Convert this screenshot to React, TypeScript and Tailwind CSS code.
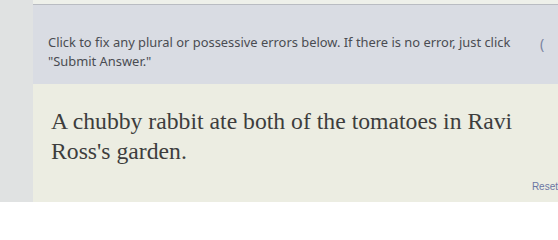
export default function App() {
  return (
    <div className="flex h-[202px] w-[558px] overflow-hidden bg-[#dfe1e1]">
      {/* left margin of the page */}
      <div className="w-[33px] shrink-0 bg-[#e0e2e2]" />

      <div className="flex min-w-0 flex-1 flex-col">
        {/* top edge */}
        <div className="h-[5px] shrink-0 border-b border-[#b9bcc2] bg-[#eef0ea]" />

        {/* instructions */}
        <div className="flex h-[79px] shrink-0 items-start bg-[#d9dce3] pl-[15px] pr-[10px] pt-[28px]">
          <p className="w-[478px] shrink-0 font-['Noto_Sans',sans-serif] text-[12.9px] leading-[19px] text-[#4a4c52]">
            Click to fix any plural or possessive errors below. If there is no error, just click
            <br />
            "Submit Answer."
          </p>
          <span className="ml-[14px] mt-[1px] font-['Noto_Sans',sans-serif] text-[14px] leading-[19px] text-[#7a83a0]">
            (
          </span>
        </div>

        {/* question */}
        <div className="relative flex-1 bg-[#ecede2] pl-[18px] pt-[22px]">
          <p className="w-[480px] font-['Liberation_Serif',serif] text-[23.7px] leading-[30px] text-[#3d3d3d]">
            A chubby rabbit ate both of the tomatoes in Ravi Ross's garden.
          </p>
          <span className="absolute bottom-[8px] right-[0px] font-['Liberation_Sans',sans-serif] text-[10px] text-[#6b76a3]">
            Reset
          </span>
        </div>
      </div>
    </div>
  );
}
